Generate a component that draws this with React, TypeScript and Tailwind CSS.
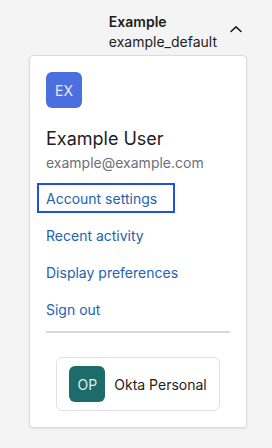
import React from "react";

const links = ["Account settings", "Recent activity", "Display preferences", "Sign out"];

function Avatar({ initials, className }: { initials: string; className: string }) {
  return (
    <div
      className={
        "flex h-9 w-9 shrink-0 items-center justify-center rounded-[6px] text-[14px] " + className
      }
    >
      {initials}
    </div>
  );
}

export default function App() {
  return (
    <div className="min-h-[448px] w-full bg-[#f4f4f4] pl-[29px] pr-[25px] pt-[12px] font-['Inter',sans-serif]">
      <div className="flex items-center justify-end">
        <div className="flex flex-col text-[14px] leading-[20px] text-[#1d1d21]">
          <span className="font-semibold">Example</span>
          <span>example_default</span>
        </div>
        <svg
          className="ml-[13px] mr-[5px] mt-[-6px]"
          width="12"
          height="8"
          viewBox="0 0 12 8"
          fill="none"
          stroke="#1d1d21"
          strokeWidth="1.6"
          strokeLinecap="round"
          strokeLinejoin="round"
        >
          <path d="M1 6.5 6 1.8l5 4.7" />
        </svg>
      </div>

      <div className="mt-[3px] rounded-[4px] border border-[#dcdcdc] bg-white px-4 pb-4 pt-4 shadow-[0_1px_2px_rgba(0,0,0,0.08)]">
        <Avatar initials="EX" className="bg-[#4c6fe0] text-[#e4e9ff]" />
        <div className="mt-[17px] text-[18px] leading-[28px] text-[#1d1d21]">Example User</div>
        <div className="text-[14px] leading-[20px] text-[#6e6e78]">example@example.com</div>

        <div className="mt-[10px] flex flex-col items-start gap-[7px]">
          {links.map((label, i) => (
            <a
              key={label}
              className={
                "-ml-[9px] flex h-[30px] items-center pl-[7px] pr-[16px] text-[14px] text-[#2462b0] " +
                (i === 0 ? "border-2 border-[#1f4fe6]" : "border-2 border-transparent")
              }
            >
              {label}
            </a>
          ))}
        </div>

        <div className="mt-[7px] h-[2px] bg-[#d8d8d8]" />

        <div className="mt-6 flex justify-center">
          <div className="flex items-center gap-[9px] rounded-[6px] border border-[#e1e1e1] py-2 pl-3 pr-3">
            <Avatar initials="OP" className="bg-[#1d6b6b] text-[#dff0ee]" />
            <span className="text-[14px] text-[#1d1d21]">Okta Personal</span>
          </div>
        </div>
      </div>
    </div>
  );
}
